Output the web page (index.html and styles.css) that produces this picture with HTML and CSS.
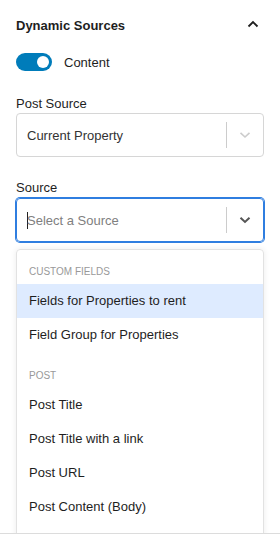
FILE: index.html
```html
<!DOCTYPE html>
<html lang="en">
<head>
  <meta charset="UTF-8">
  <title>Dynamic Sources</title>
  <link rel="stylesheet" href="styles.css">
</head>
<body>
<div class="panel">
  <!-- header -->
  <div class="panelHead">
    <span class="panelTitle">Dynamic Sources</span>
    <svg class="chevUp" width="12" height="8" viewBox="0 0 12 8">
      <path d="M1.5 6.5 L6 2 L10.5 6.5" fill="none" stroke="#1e1e1e" stroke-width="1.8"/>
    </svg>
  </div>

  <!-- toggle -->
  <div class="toggleRow">
    <span class="toggle"><span class="knob"></span></span>
    <span class="toggleLabel">Content</span>
  </div>

  <div class="fieldLabel first">Post Source</div>
  <div class="select">
    <span class="value">Current Property</span>
    <span class="sep"></span>
    <span class="arrow">
      <svg width="12" height="8" viewBox="0 0 12 8">
        <path d="M1.5 1.8 L6 6 L10.5 1.8" fill="none" stroke="#cccccc" stroke-width="1.6"/>
      </svg>
    </span>
  </div>

  <div class="fieldLabel">Source</div>
  <div class="select focused">
    <span class="value placeholder"><span class="caret"></span>Select a Source</span>
    <span class="sep"></span>
    <span class="arrow">
      <svg width="12" height="8" viewBox="0 0 12 8">
        <path d="M1.5 1.8 L6 6 L10.5 1.8" fill="none" stroke="#555555" stroke-width="2"/>
      </svg>
    </span>
  </div>

  <!-- options menu -->
  <div class="menu">
    <div class="group">
      <div class="groupHead">Custom Fields</div>
      <div class="option active">Fields for Properties to rent</div>
      <div class="option">Field Group for Properties</div>
    </div>
    <div class="group">
      <div class="groupHead">Post</div>
      <div class="option">Post Title</div>
      <div class="option">Post Title with a link</div>
      <div class="option">Post URL</div>
      <div class="option">Post Content (Body)</div>
    </div>
  </div>
</div>
</body>
</html>
```

FILE: styles.css
```css
:root {
  --text: #1e1e1e;
  --grey: #999;
  --border: #d6d6d6;
  --wpBlue: #007cba;
  --focus: #2f7ee0;
  --hover: #deebff;
}
* {
  box-sizing: border-box;
  font-family: "Liberation Sans", Arial, sans-serif;
}
body {
  margin: 0;
  background: #fff;
}
.panel {
  width: 280px;
  height: 534px;
  padding: 0 16px;
  overflow: hidden;
  border-bottom: 1px solid #dcdcdc;
}
.panelHead {
  height: 50px;
  display: flex;
  align-items: center;
  justify-content: space-between;
}
.panelTitle {
  font-size: 13px;
  font-weight: bold;
  color: var(--text);
}
.chevUp {
  margin-right: 5px;
  margin-top: -3px;
}
.toggleRow {
  margin-top: 3px;
  height: 18px;
  display: flex;
  align-items: center;
}
.toggle {
  width: 36px;
  height: 18px;
  border-radius: 9px;
  background: var(--wpBlue);
  display: flex;
  align-items: center;
  justify-content: flex-end;
  padding-right: 3px;
}
.knob {
  width: 12px;
  height: 12px;
  border-radius: 50%;
  background: #fff;
}
.toggleLabel {
  margin-left: 12px;
  font-size: 13px;
  color: var(--text);
}
.fieldLabel {
  margin-top: 22px;
  height: 18px;
  line-height: 18px;
  font-size: 13px;
  color: var(--text);
}
.fieldLabel.first {
  margin-top: 24px;
}
.select {
  height: 44px;
  border: 1px solid var(--border);
  border-radius: 4px;
  display: flex;
  align-items: center;
}
.select.focused {
  margin-top: 1px;
  border-color: var(--focus);
  box-shadow: 0 0 0 1px var(--focus);
}
.value {
  flex: 1;
  padding-left: 10px;
  font-size: 13px;
  color: #333;
}
.placeholder {
  color: #808080;
  display: flex;
  align-items: center;
}
.caret {
  width: 1px;
  height: 17px;
  margin-right: -1px;
  background: #222;
}
.sep {
  width: 1px;
  height: 26px;
  background: #ccc;
}
.arrow {
  width: 36px;
  display: flex;
  justify-content: center;
  align-items: center;
}
.menu {
  margin-top: 7px;
  padding-top: 2px;
  height: 300px;
  border: 1px solid #e2e2e2;
  border-radius: 4px;
  box-shadow: 0 0 6px rgba(0, 0, 0, 0.08);
}
.group {
  padding: 8px 0 4px;
}
.groupHead {
  padding: 4px 12px;
  line-height: 16px;
  font-size: 10px;
  text-transform: uppercase;
  color: var(--grey);
}
.option {
  height: 34px;
  line-height: 34px;
  padding-left: 12px;
  font-size: 13px;
  color: var(--text);
}
.option.active {
  background: var(--hover);
}
```
